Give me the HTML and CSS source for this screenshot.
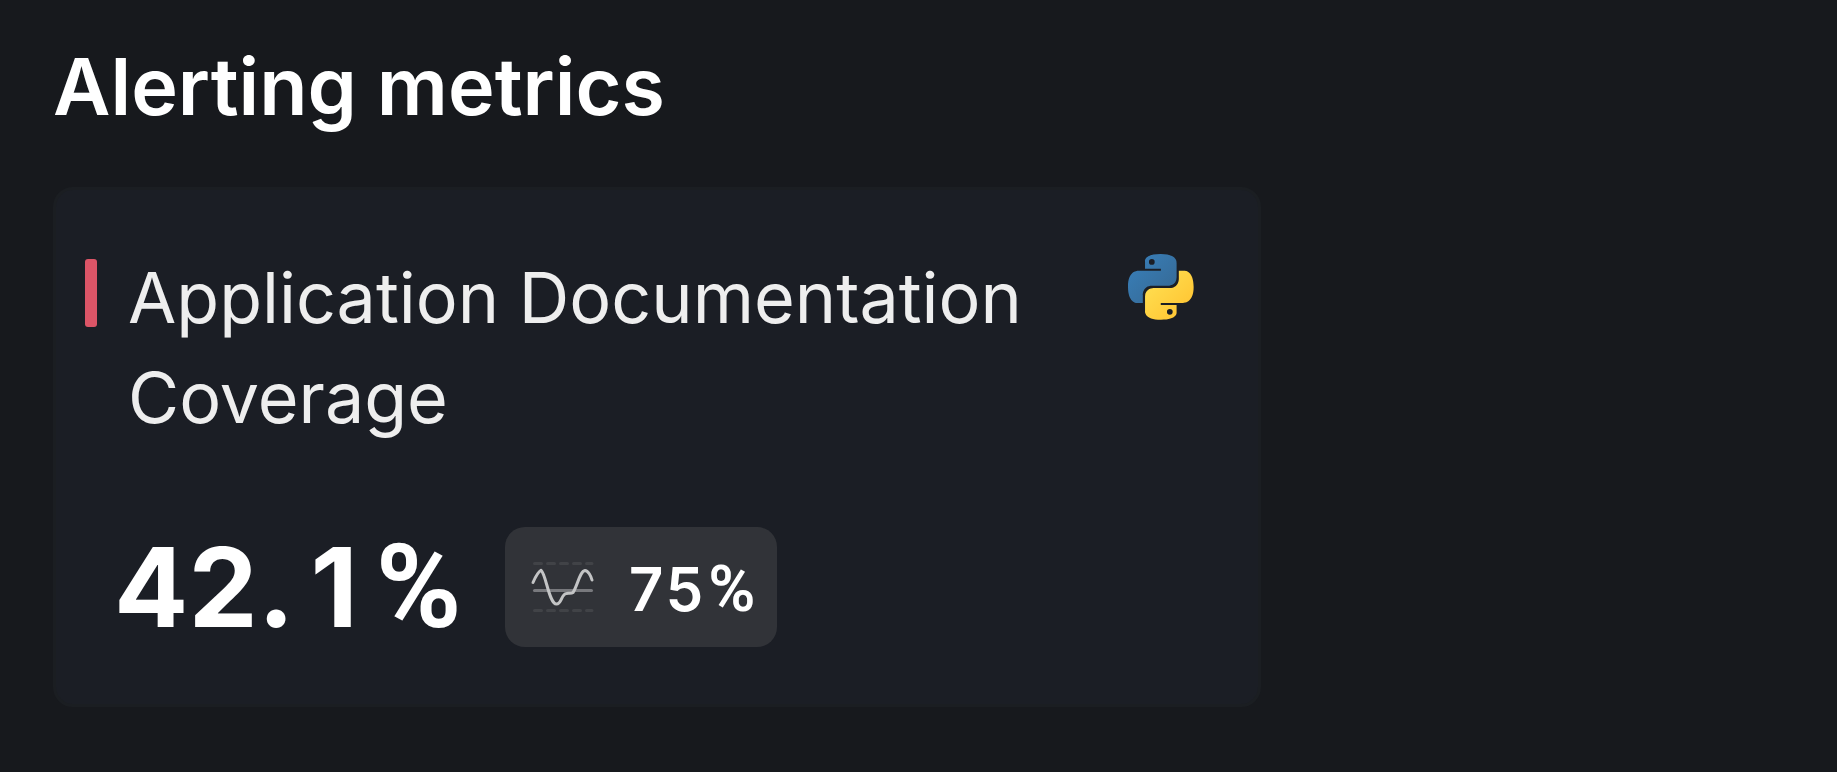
FILE: index.html
```html
<!DOCTYPE html>
<html lang="en">
<head>
<meta charset="utf-8">
<meta name="viewport" content="width=device-width, initial-scale=1">
<title>Alerting metrics</title>
<link rel="stylesheet" href="styles.css">
</head>
<body>
<main class="page">
  <h1 class="heading">Alerting metrics</h1>
  <article class="card">
    <header class="card-header">
      <span class="status"></span>
      <h2 class="card-title">Application Documentation Coverage</h2>
      <svg class="logo" viewBox="0 0 110 110" role="img" aria-label="Python">
        <defs>
          <linearGradient id="blue" x1="0" y1="0" x2="1" y2="1"><stop offset="0.1" stop-color="#387eb8"/><stop offset="0.9" stop-color="#366994"/></linearGradient>
          <linearGradient id="yellow" x1="0" y1="0" x2="1" y2="1"><stop offset="0.1" stop-color="#ffe052"/><stop offset="0.9" stop-color="#ffc331"/></linearGradient>
        </defs>
        <path fill="url(#blue)" d="M54.3 0C26.700 0 28.400 12 28.400 12L28.400 24.400H54.800V28.100H18S0 26.100 0 54.400C0 82.600 15.500 81.600 15.500 81.600H24.700V68.500S24.200 53 40 53H66.200S81 53.200 81 38.700V14.700S83.200 0 54.300 0ZM39.700 8.400A4.800 4.800 0 1 1 39.700 18A4.800 4.800 0 1 1 39.700 8.400Z"/>
        <path fill="url(#yellow)" d="M55.100 109.600C82.700 109.600 81 97.600 81 97.600L81 85.200H54.600V81.500H91.400S109.400 83.500 109.400 55.200C109.400 27 93.900 28 93.900 28H84.700V41.100S85.200 56.600 69.400 56.600H43.200S28.400 56.400 28.400 70.900V94.900S26.200 109.600 55.100 109.600ZM69.700 101.200A4.800 4.800 0 1 1 69.700 91.600A4.800 4.800 0 1 1 69.700 101.200Z"/>
      </svg>
    </header>
    <div class="figures">
      <strong class="value">42.<span class="fraction">1</span><span class="unit">%</span></strong>
      <span class="target">
        <svg class="spark" viewBox="0 0 64 54" aria-hidden="true">
          <path class="limit" d="M3.500 3.500H61M3.500 50.500H61"/>
          <path class="mean" d="M3.500 30.500H60.500"/>
          <path class="wave" d="M2 22.500C4 18 7 12 10 10.300C15 14 18 44 25.500 44C31 44 30 34 35.500 33.500C38 33 40 34 42 32.500C46 27 49 11 54 10.500C57 10.500 60 16 61 20"/>
        </svg>
        <span class="target-value">75<span class="unit">%</span></span>
      </span>
    </div>
  </article>
</main>
</body>
</html>
```
FILE: styles.css
```css
* {
  box-sizing: border-box;
}

body {
  margin: 0;
  min-height: 100vh;
  background: #17191d;
  color: #fff;
  font-family: Inter, "Liberation Sans", sans-serif;
}

.page {
  padding: 38px 53px 64px;
}

.heading {
  margin: 0 0 52px;
  font-size: 79px;
  font-weight: 600;
  line-height: 97px;
}

.card {
  max-width: 1208px;
  padding: 48px 64px 57px 29px;
  border: 3px solid #1b1e22;
  border-radius: 20px;
  background: #1b1e25;
}

.card-header {
  display: flex;
  align-items: flex-start;
}

.status {
  flex: none;
  width: 12px;
  height: 68px;
  margin-top: 21px;
  border-radius: 3px;
  background: #dc5567;
}

.card-title {
  flex: 1;
  margin: 10px 60px 0 31px;
  color: #eee;
  font-size: 70px;
  font-weight: 400;
  line-height: 100px;
}

.logo {
  flex: none;
  width: 66px;
  height: 66px;
  margin-top: 16px;
}

.figures {
  display: flex;
  align-items: center;
  gap: 43px;
  margin-top: 79px;
  padding-left: 29px;
}

.value {
  font-size: 110px;
  font-weight: 700;
  line-height: 120px;
  font-optical-sizing: none;
}

.unit {
  font-family: Roboto, sans-serif;
  font-size: 116px;
  line-height: 0;
}

.fraction {
  margin: 0 18px 0 16px;
}

.target {
  display: flex;
  align-items: center;
  gap: 32px;
  height: 120px;
  padding: 0 22px 0 26px;
  border-radius: 20px;
  background: #313338;
}

.target-value {
  padding-top: 4px;
  font-size: 60px;
  font-weight: 600;
  font-variant-numeric: tabular-nums;
}

.target-value .unit {
  margin-left: 4px;
  font-size: 64px;
}

.spark {
  width: 64px;
  height: 54px;
  fill: none;
  stroke-linecap: round;
  stroke-linejoin: round;
  stroke-width: 3;
}

.limit {
  stroke: #414347;
  stroke-dasharray: 7 6;
}

.mean {
  stroke: #78797d;
}

.wave {
  stroke: #c3c4c5;
}
```
